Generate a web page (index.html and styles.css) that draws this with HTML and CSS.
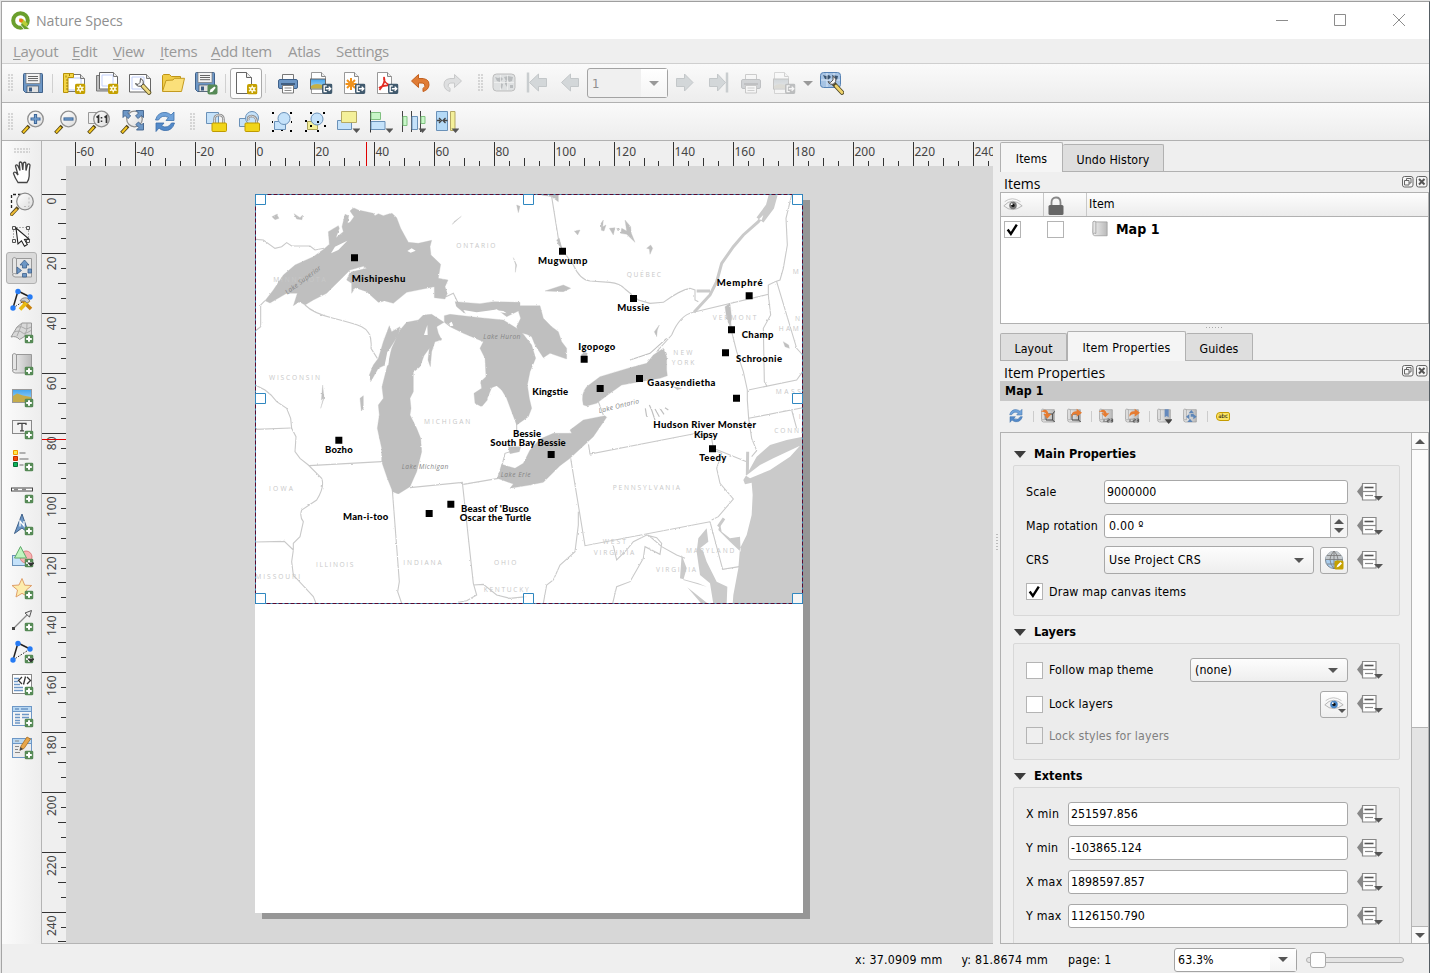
FILE: index.html
```html
<!DOCTYPE html>
<html lang="en">
<head>
<meta charset="utf-8">
<title>Nature Specs</title>
<link rel="stylesheet" href="styles.css">
</head>
<body>
<svg class="defs" aria-hidden="true">
<defs>
<linearGradient id="g-grey" x1="0" x2="1"><stop offset="0" stop-color="#f0f0f0"/><stop offset="1" stop-color="#b9b9b9"/></linearGradient>
<linearGradient id="g-lens" x1="0" y1="0" x2="1" y2="1"><stop offset="0" stop-color="#fff"/><stop offset="1" stop-color="#dcdcdc"/></linearGradient>
<linearGradient id="g-sky" x1="0" x2="0" y1="0" y2="1"><stop offset="0" stop-color="#42a4ee"/><stop offset="1" stop-color="#b4dcf6"/></linearGradient>
<filter id="coast" x="0" y="0" width="1" height="1"><feTurbulence type="fractalNoise" baseFrequency=".11" numOctaves="3" seed="4"/><feDisplacementMap in="SourceGraphic" scale="6" xChannelSelector="R" yChannelSelector="G"/></filter>
</defs>
<symbol id="b-plus" viewBox="0 0 9 9"><rect width="9" height="9" rx="1.8" fill="#568a56"/><path d="M4.5 1.7v5.6M1.7 4.500h5.600" stroke="#fff" stroke-width="2"/></symbol>
<symbol id="b-star" viewBox="0 0 11 11"><rect width="11" height="11" rx="2" fill="#c4a000"/><path d="M5.500 1.500v8M2 3.500l7 4M9 3.500l-7 4" stroke="#fffbe0" stroke-width="1.500"/><circle cx="5.500" cy="5.500" r="2.500" fill="#fffbe0"/><circle cx="5.500" cy="5.500" r="1" fill="#c4a000"/></symbol>
<symbol id="b-exp" viewBox="0 0 11 11"><rect width="11" height="11" rx="2" fill="#415a6e"/><path d="M5 2.500H2.300v6H5M4 5.500h5M7 3.300l2.200 2.200L7 7.700" fill="none" stroke="#fff" stroke-width="1.400"/></symbol>
<symbol id="save" viewBox="0 0 24 24"><path d="M2.500 3.500q0-1 1-1h17q1 0 1 1v18h-17l-2-2z" fill="#6d97c6" stroke="#3f618a"/><rect x="5" y="2.500" width="14" height="10" fill="#f4f4f4" stroke="#777" stroke-width=".7"/><path d="M7 5.500h10M7 7.500h10M7 9.700h10" stroke="#666"/><rect x="6" y="15" width="11.500" height="6.500" fill="#e2e2e2" stroke="#456" stroke-width=".7"/><rect x="8" y="16.500" width="3" height="4" fill="#3b5b82"/></symbol>
<symbol id="saveas" viewBox="0 0 24 24"><use href="#save" x="-1" y="-1"/><rect x="13.500" y="13.500" width="10" height="10" rx="2" fill="#568a56"/><path d="M15.500 21.500l1-3 4-3 1.200 1.200-3.200 4z" fill="#fff"/></symbol>
<symbol id="newlay" viewBox="0 0 24 24"><path d="M2.500 3.500h16l4 4v13h-20z" fill="#fff" stroke="#777"/><path d="M5 7h14v12H5z" fill="none" stroke="#b9caf7"/><path d="M18.500 3.500v4h4" fill="#ddd" stroke="#777"/><path d="M1.500 2.500h10v4h-5.500v15h-4.500z" fill="#f3d547" stroke="#b89206"/><path d="M4 9h2M4 12h2M4 15h2M4 18h2M4 4.500v2M7.500 3v2" stroke="#8a6a00" stroke-width=".8"/><use href="#b-star" x="13" y="12.500" width="10.500" height="10.500"/></symbol>
<symbol id="duplay" viewBox="0 0 24 24"><path d="M1.500 4.500v15.500h17V4.500z" fill="#c0c0c0" stroke="#777"/><path d="M4.500 1.500h14l4 4v12.500h-18z" fill="#fff" stroke="#666"/><path d="M7 4h11v11H7z" fill="none" stroke="#c3d0fa"/><path d="M18.500 1.500v4h4" fill="#eee" stroke="#777"/><use href="#b-star" x="13" y="12.500" width="10.500" height="10.500"/></symbol>
<symbol id="manage" viewBox="0 0 24 24"><path d="M1.500 3.500h17l4 4v13.500h-21z" fill="#fff" stroke="#666"/><path d="M4 6h12v12H4z" fill="none" stroke="#c3d0fa"/><path d="M18.500 3.500v4h4" fill="#ddd" stroke="#777"/><path d="M14 14l7 7.500" stroke="#5d5326" stroke-width="4.600" stroke-linecap="round"/><path d="M15 15l6 6.500" stroke="#eed982" stroke-width="2.800" stroke-linecap="round"/><path d="M12.500 7.500a4 4 0 1 1-5 5l2.500 1 2-2z" fill="#f5f5f5" stroke="#555"/></symbol>
<symbol id="folder" viewBox="0 0 24 24"><path d="M1.500 20V4.500l1-1h6l2 2h9v2" fill="#f1cd48" stroke="#bf9517"/><path d="M1.500 20.500L5 9.500l7-.5 1.500-1.700h10l-3 13.200z" fill="#fbe07a" stroke="#c39a20"/></symbol>
<symbol id="newpage" viewBox="0 0 24 24"><path d="M2.500 1.500h10l5 5v16h-15z" fill="#fff" stroke="#666"/><path d="M12.500 1.500v5h5" fill="#eee" stroke="#666"/><use href="#b-star" x="13" y="13" width="10.500" height="10.500"/></symbol>
<symbol id="print" viewBox="0 0 24 24"><path d="M6.500 9V3.500h11V9" fill="#fafafa" stroke="#777"/><rect x="2.500" y="8.500" width="19" height="9" rx="1.500" fill="#6d97c6" stroke="#3f618a"/><path d="M5 13h14" stroke="#324c6b" stroke-width="1.500"/><path d="M6.500 14.500h11v7.500h-11z" fill="#fff" stroke="#777"/><path d="M8.500 17h7M8.500 19.500h7" stroke="#888"/></symbol>
<symbol id="expimg" viewBox="0 0 24 24"><path d="M2.500 1.500h10l4 4v17h-14z" fill="#fff" stroke="#999"/><path d="M12.500 1.500v4h4" fill="#eee" stroke="#888"/><rect x="1.500" y="8" width="15" height="10" fill="url(#g-sky)" stroke="#666"/><path d="M2 15q5-4 14 0v2.500H2z" fill="#c5b046"/><use href="#b-exp" x="13" y="12.500" width="10.500" height="10.500"/></symbol>
<symbol id="expsvg" viewBox="0 0 24 24"><path d="M2.500 1.500h10l4 4v17h-14z" fill="#fff" stroke="#999"/><path d="M12.500 1.500v4h4" fill="#eee" stroke="#888"/><path d="M9 7v12M3.500 13h11M5 9l8 8M13 9l-8 8" stroke="#f0921c" stroke-width="2"/><use href="#b-exp" x="13" y="12.500" width="10.500" height="10.500"/></symbol>
<symbol id="exppdf" viewBox="0 0 24 24"><path d="M2.500 1.500h10l4 4v17h-14z" fill="#fff" stroke="#999"/><path d="M12.500 1.500v4h4" fill="#eee" stroke="#888"/><path d="M9 6q2 5-4.500 13M9 6q-1 6 7 8.500-8-1-12 2.500" fill="none" stroke="#e32b22" stroke-width="1.700"/><use href="#b-exp" x="13" y="12.500" width="10.500" height="10.500"/></symbol>
<symbol id="undo" viewBox="0 0 24 24"><path d="M3.500 10l7-6.500v4q11-1 10.500 6.500-.5 5-6 6.500v-3q3-2 1.500-4.500-1.500-1.500-6-1v4.500z" fill="#e07c35" stroke="#c25f1d"/></symbol>
<symbol id="redo" viewBox="0 0 24 24"><path d="M20.500 10l-7-6.500v4q-11-1-10.500 6.500.5 5 6 6.500v-3q-3-2-1.500-4.500 1.500-1.500 6-1v4.500z" fill="#dedfe0" stroke="#c8c9ca"/></symbol>
<symbol id="world" viewBox="0 0 24 24"><rect x="1" y="3" width="22" height="17" rx="3.500" fill="#dfe1e2" stroke="#bdbdbd"/><path d="M3 6l3 1 3-1 2 2-3 3-3-1zM8 12l3 1-1 5-2-2zM12 6l4-1 5 1-1 4-3 1-1-2-2 1zM13 10l3 1-1 5-2-3zM18 14h3v3h-3z" fill="#b9bcbe"/><path d="M2 11.500h20M8.500 4v15M15.500 4v15" stroke="#f4f4f4" stroke-width=".7"/></symbol>
<symbol id="prev" viewBox="0 0 24 24"><path d="M3.500 11.500l9-8.500v4.500h8v8h-8V20z" fill="#d3d7d9" stroke="#c3c7c9"/></symbol>
<symbol id="next" viewBox="0 0 24 24"><path d="M20 11.500L11.500 3v4.500h-8v8h8V20z" fill="#d3d7d9" stroke="#c3c7c9"/></symbol>
<symbol id="first" viewBox="0 0 24 24"><path d="M3 1.500v20" stroke="#c9cdcf" stroke-width="2.500"/><path d="M4.500 11.500l9-8.500v4.500h8v8h-8V20z" fill="#d3d7d9" stroke="#c3c7c9"/></symbol>
<symbol id="last" viewBox="0 0 24 24"><path d="M21 1.500v20" stroke="#c9cdcf" stroke-width="2.500"/><path d="M19.500 11.500L11.500 3v4.500h-8v8h8V20z" fill="#d3d7d9" stroke="#c3c7c9"/></symbol>
<symbol id="atlasset" viewBox="0 0 24 24"><rect x=".5" y="1.500" width="20" height="15" rx="3" fill="#a7c4e4" stroke="#5682b4"/><path d="M3 4l3 1 3-1 2 2-3 3-3-1zM12 4l6 1-1 4-3 1z" fill="#3a5470"/><path d="M1 9h19M7 2v14M14 2v14" stroke="#e8f1fa" stroke-width=".8"/><path d="M14 13l8 8.500" stroke="#4d4625" stroke-width="4.500" stroke-linecap="round"/><path d="M16 15l6 6.500" stroke="#eed26b" stroke-width="2.800" stroke-linecap="round"/><path d="M13 5.500a4 4 0 1 1-5 5l2.500 1 2.500-2.500z" fill="#f5f5f5" stroke="#555"/></symbol>
<symbol id="lens" viewBox="0 0 24 24"><path d="M8 16l-6.500 7" stroke="#4a3d12" stroke-width="3.600"/><path d="M7 17l-5 5.500" stroke="#f3c622" stroke-width="2"/><circle cx="14.500" cy="9" r="7.800" fill="url(#g-lens)" stroke="#909090" stroke-width="1.300"/></symbol>
<symbol id="zin" viewBox="0 0 24 24"><use href="#lens"/><path d="M14.500 4v10M9.500 9h10" stroke="#3c6698" stroke-width="3.200"/><path d="M14.500 5v8M10.500 9h8" stroke="#739fce" stroke-width="1.300"/></symbol>
<symbol id="zout" viewBox="0 0 24 24"><use href="#lens"/><path d="M9.500 9h10" stroke="#3c6698" stroke-width="3.200"/><path d="M10.500 9h8" stroke="#739fce" stroke-width="1.300"/></symbol>
<symbol id="zone" viewBox="0 0 24 24"><path d="M1.500 2.500h12v11h-12z" fill="#f0f0f0" stroke="#999"/><use href="#lens"/><path d="M9.500 7.500l2-1.500v7M17.500 7.500l2-1.500v7" fill="none" stroke="#333" stroke-width="1.700"/><path d="M14.500 7v1.500M14.500 10.500V12" stroke="#333" stroke-width="1.600"/></symbol>
<symbol id="zfull" viewBox="0 0 24 24"><use href="#lens"/><path d="M3 .5h7L7.700 3l3 3L8 8.500l-3-3-2 2zM23.500.5v7l-2.300-2-3 3L15.500 6l3-3L16 .5zM23.500 20h-7l2.300-2.500-3-3 2.700-2.500 3 3 2-2z" fill="#6d97c6" stroke="#3f618a" stroke-width=".9"/></symbol>
<symbol id="refresh" viewBox="0 0 24 24"><path d="M2.500 10Q5 1.500 13 2.500q3 .5 5 2.500l3-3v8.500h-8l2.500-3Q9 4 5.500 10z" fill="#71a3da" stroke="#3f72ac" stroke-width=".8"/><path d="M21.500 13Q19 21.500 11 20.500q-3-.5-5-2.500l-3 3.500v-8.500h8l-2.500 3Q15 19 18.500 13z" fill="#5289c9" stroke="#3b6da8" stroke-width=".8"/></symbol>
<symbol id="lock" viewBox="0 0 24 24"><path d="M2.500 2.500h12v11h-12z" fill="#c5e2fa" stroke="#6a91b8"/><path d="M10.500 14V9.500q0-4.500 4.500-4.500t4.500 4.500V14" fill="none" stroke="#8e8e8e" stroke-width="2.600"/><path d="M10.500 13V9.500q0-4.500 4.500-4.500t4.500 4.500V13" fill="none" stroke="#ddd"/><rect x="8" y="13" width="14.500" height="8.500" rx="1" fill="#f1d51a" stroke="#bf9b00"/></symbol>
<symbol id="unlock" viewBox="0 0 24 24"><path d="M2.500 8.500h9v8h-9z" fill="#c5e2fa" stroke="#6a91b8"/><circle cx="15" cy="8" r="6.500" fill="#c5e2fa" stroke="#6a91b8"/><path d="M11.500 10.500q-1.500-4.500 3-4.500 4.500.5 5 4.500V14" fill="none" stroke="#8e8e8e" stroke-width="2.600"/><path d="M11.500 10.500q-1.500-4.500 3-4.500 4.500.5 5 4.500V13" fill="none" stroke="#ddd"/><rect x="8" y="13" width="14.500" height="8.500" rx="1" fill="#f1d51a" stroke="#bf9b00"/></symbol>
<symbol id="group" viewBox="0 0 24 24"><path d="M4.500 11.500h11v8h-11z" fill="#c5e2fa" stroke="#6a91b8"/><circle cx="14" cy="8.500" r="6" fill="#c5e2fa" stroke="#6a91b8"/><path d="M2 2h2v2H2zM20 2h2v2h-2zM2 20h2v2H2zM20 20h2v2h-2zM11 20h2v1h-2zM2 11h1v2H2zM21 11h1v2h-1z"/></symbol>
<symbol id="ungroup" viewBox="0 0 24 24"><path d="M4.500 11.500h10v8h-10z" fill="#f4f09a" stroke="#aaa45a"/><circle cx="14" cy="9" r="6" fill="#c5e2fa" stroke="#6a91b8"/><path d="M2 10h2v2H2zM7 2h2v2H7zM20 2h2v2h-2zM2 20h2v2H2zM14 20h2v2h-2zM21 15h2v2h-2zM7 15h2v2H7zM14 11h2v2h-2z"/></symbol>
<symbol id="raise" viewBox="0 0 24 24"><path d="M1.500 10.500h14v9h-14z" fill="#c5e2fa" stroke="#6a91b8"/><path d="M5.500 1.500h15v11h-15z" fill="#f4f09a" stroke="#b5a964"/><path d="M16.500 18.500h8l-4 4.500z" fill="#555"/></symbol>
<symbol id="align" viewBox="0 0 24 24"><path d="M1.500.5v22" stroke="#333"/><path d="M2 2.500h9.500v7H2z" fill="#c8f7c8" stroke="#80c080"/><path d="M2 11.500h14v8H2z" fill="#c5e2fa" stroke="#6a91b8"/><path d="M16.500 18.500h8l-4 4.500z" fill="#555"/></symbol>
<symbol id="distrib" viewBox="0 0 24 24"><path d="M.5 1v21M9.500 1v21M18.500 1v21" stroke="#444"/><path d="M1 6.500h4v9H1zM19 6.500h4v7h-4z" fill="#c8f7c8" stroke="#80c080"/><path d="M10 6.500h5.500v13H10z" fill="#c5e2fa" stroke="#6a91b8"/><path d="M16.500 18.500h8l-4 4.500z" fill="#555"/></symbol>
<symbol id="resize" viewBox="0 0 24 24"><path d="M1.500 1.500h11v19h-11z" fill="#b5daf7" stroke="#6a91b8"/><path d="M15.500 1.500h4.500v19h-4.500z" fill="#f4f09a" stroke="#b5a964"/><path d="M2 10.500h3M4 8l2.500 2.500L4 13M12.500 10.500H9M10.500 8L8 10.500l2.500 2.500" fill="none" stroke="#444" stroke-width="1.300"/><path d="M16.500 18.500h8l-4 4.500z" fill="#555"/></symbol>
<symbol id="hand" viewBox="0 0 24 24"><path d="M8 22.500Q5 18 3.500 13.500q0-2 2.500-1l2 2.500L5.500 6q.5-2 2.300-.5L10 10.500 9.300 3q1-2 2.500 0l1 7 .5-7q1.500-1.500 2.500 0l.2 7.500 1.500-6q1.500-1.500 2.500.5-1 6-.8 11-.2 3.500-2.200 6.500z" fill="#fff" stroke="#444" stroke-width="1.300"/></symbol>
<symbol id="zoomsel" viewBox="0 0 24 24"><path d="M1.500 16V2.500H12" fill="none" stroke="#222" stroke-dasharray="3 2" stroke-width="1.300"/><path d="M8 15.500L.5 23.500" stroke="#5b4b20" stroke-width="3.600"/><path d="M7 17l-6 6" stroke="#f0bd35" stroke-width="1.800"/><circle cx="15" cy="9.500" r="8.300" fill="url(#g-lens)" stroke="#8a8a8a" stroke-width="1.200"/><path d="M14 14.500h5V4.500" fill="none" stroke="#bbb" stroke-dasharray="2 2"/></symbol>
<symbol id="select" viewBox="0 0 24 24"><path d="M3.500 3.500h15v14h-15z" fill="none" stroke="#666" stroke-dasharray="1 2"/><path d="M2.500 2.500h3v3h-3zM16.500 2.500h3v3h-3zM2.500 15.500h3v3h-3zM16.500 15.500h3v3h-3z" fill="#eee" stroke="#555"/><path d="M6 4l13 11-4.500.5 2.800 5-2.800 1.800-3-5.500L8 20z" fill="#fff" stroke="#222" stroke-width="1.100"/></symbol>
<symbol id="mapitem" viewBox="0 0 24 24"><path d="M3.500 2.500h18v18.500H5q-3-.5-2.500-3.500z" fill="url(#g-grey)" stroke="#999"/><path d="M2.500 17V2.500Q4 .5 6.500 2.500v15.500q-2-1-4 0" fill="#e5e5e5" stroke="#999"/></symbol>
<symbol id="movecontent" viewBox="0 0 24 24"><path d="M3.500 2.500h18v18.500H5q-3-.5-2.500-3.500z" fill="#e6e6e6" stroke="#999"/><path d="M2.500 17V2.500Q4 .5 6.500 2.500v15.500q-2-1-4 0" fill="#e5e5e5" stroke="#999"/><path d="M14.500 4l4.500 5h-2.500v3h-4V9H10zM7 11l4.500 3.500L7 18zM21.500 13v4H18v-4zM12.500 21v-3.500h4V21z" fill="#6d97c6" stroke="#3f618a" stroke-width=".8"/></symbol>
<symbol id="nodes" viewBox="0 0 24 24"><path d="M8 3L3 20M8 3l12 6" stroke="#222" stroke-width="1.500"/><path d="M3 20L20 9" stroke="#222" stroke-dasharray="1.500 1.500"/><circle cx="8" cy="3.500" r="2.700" fill="#267bf4"/><circle cx="20" cy="9" r="2.700" fill="#267bf4"/><circle cx="3" cy="20" r="2.700" fill="#267bf4"/></symbol>
<symbol id="editnodes" viewBox="0 0 24 24"><use href="#nodes"/><path d="M12 12l9 9" stroke="#c8800c" stroke-width="3.600"/><path d="M19 12l-9 9.500" stroke="#e9bb12" stroke-width="3.600"/><path d="M10 13q2-4 7-3l3 3-3 2-2-2z" fill="#ccc" stroke="#888"/></symbol>
<symbol id="add3d" viewBox="0 0 24 24"><path d="M1 17L7 7l5-4h9.500v12.500q-8 0-12 4-3-4-8.500-2.500z" fill="#d8d8d8" stroke="#999"/><path d="M4 12q6-2 8 .5t9-2M7 7q5-1 7 1t7-1M12 3q-2 6-5 13M17 3q1 7-3 14" fill="none" stroke="#aaa"/><use href="#b-plus" x="14.500" y="14.500" width="9" height="9"/></symbol>
<symbol id="addmap" viewBox="0 0 24 24"><use href="#mapitem"/><use href="#b-plus" x="14.500" y="14.500" width="9" height="9"/></symbol>
<symbol id="addpic" viewBox="0 0 24 24"><rect x="2.500" y="5.500" width="19" height="13" fill="url(#g-sky)" stroke="#999"/><path d="M3 12l4-2.500 6 2 8 1.500v5H3z" fill="#c5ac4b"/><use href="#b-plus" x="14.500" y="14.500" width="9" height="9"/></symbol>
<symbol id="addlabel" viewBox="0 0 24 24"><rect x="2.500" y="4.500" width="19" height="13" fill="#f2f2f2" stroke="#888"/><path d="M8 9V7.300h8V9M12 7.500v7.300M10 14.800h4" fill="none" stroke="#444" stroke-width="1.300"/><use href="#b-plus" x="14.500" y="14.500" width="9" height="9"/></symbol>
<symbol id="addlegend" viewBox="0 0 24 24"><path d="M3.500 2.500h4v4h-4z" fill="#fce94f" stroke="#f39a00"/><path d="M3.500 8.500h4v4h-4z" fill="#f0490d" stroke="#c02c00"/><path d="M3.500 14.500h4v4h-4z" fill="#10b35c" stroke="#087038"/><path d="M9.500 5h6M9.500 11h9M9.500 17h4" stroke="#999" stroke-width="1.500"/><use href="#b-plus" x="14.500" y="14.500" width="9" height="9"/></symbol>
<symbol id="addscale" viewBox="0 0 24 24"><rect x="1.500" y="8" width="21" height="3" fill="#fff" stroke="#444"/><path d="M4 9.500h4M12 9.500h4" stroke="#888" stroke-width="2"/><use href="#b-plus" x="14.500" y="14.500" width="9" height="9"/></symbol>
<symbol id="addnorth" viewBox="0 0 24 24"><path d="M12 2l6.500 19L12 16 4.500 21.500z" fill="#6d97c6" stroke="#3f618a"/><path d="M10 14.500V9l4 5V9" fill="none" stroke="#fff" stroke-width="1.300"/><use href="#b-plus" x="14.500" y="14.500" width="9" height="9"/></symbol>
<symbol id="addshape" viewBox="0 0 24 24"><rect x="2.500" y="11.500" width="13" height="10" fill="#c5e2fa" stroke="#6a91b8"/><circle cx="16" cy="13" r="6" fill="#f7b4b4" stroke="#e08080"/><path d="M10.500 2.500l6 11.500h-12z" fill="#bff5bf" stroke="#5fa86a"/><use href="#b-plus" x="14.500" y="14.500" width="9" height="9"/><path d="M17 18.500h8l-4 4z" fill="#333"/></symbol>
<symbol id="addmark" viewBox="0 0 24 24"><path d="M12 2.500l2.700 6.700 7 .3-5.400 4.500 2 7L12 17.300 6 21l1.500-7L2 9.500l7-.5z" fill="#fdedad" stroke="#e0a06a"/><use href="#b-plus" x="14.500" y="14.500" width="9" height="9"/></symbol>
<symbol id="addarrow" viewBox="0 0 24 24"><path d="M3.500 20.500L18 6" stroke="#888" stroke-width="1.300"/><path d="M15 5l6.500-2.500L19.500 9z" fill="#eee" stroke="#555"/><path d="M2 19h3v3H2z" fill="#444"/><use href="#b-plus" x="14.500" y="14.500" width="9" height="9"/></symbol>
<symbol id="addnode" viewBox="0 0 24 24"><use href="#nodes"/><use href="#b-plus" x="14.500" y="14.500" width="9" height="9"/><path d="M17 18.500h8l-4 4z" fill="#333"/></symbol>
<symbol id="addhtml" viewBox="0 0 24 24"><rect x="2.500" y="2.500" width="19" height="19" fill="#fff" stroke="#888"/><path d="M4 6.500h5M4 9.500h4M4 12.500h6M4 15.500h9M4 18.500h9" stroke="#6d97c6" stroke-width="1.700"/><path d="M12 5L8.500 8.500 12 12M17 5l3.500 3.500L17 12M15.500 4.500l-2 8" fill="none" stroke="#333" stroke-width="1.300"/><use href="#b-plus" x="14.500" y="14.500" width="9" height="9"/></symbol>
<symbol id="addtable" viewBox="0 0 24 24"><rect x="2.500" y="2.500" width="19" height="19" fill="#f6f6f6" stroke="#6d97c6"/><path d="M3 3h18v4H3z" fill="#b9d8f2"/><path d="M2.500 7.500h19" stroke="#6d97c6"/><path d="M5 5h4M11 5h7M5 10.500h5M12 10.500h7M5 13.500h5M12 13.500h7M5 16.500h5M5 19h5" stroke="#6d97c6" stroke-width="1.300"/><use href="#b-plus" x="14.500" y="14.500" width="9" height="9"/></symbol>
<symbol id="addmanual" viewBox="0 0 24 24"><rect x="2.500" y="2.500" width="19" height="19" fill="#ececec" stroke="#6d97c6"/><path d="M3 3h18v4H3z" fill="#b9d8f2"/><path d="M2.500 7.500h19" stroke="#6d97c6"/><path d="M5 5h4M5 10.500h4M5 13.500h3M5 16.500h5" stroke="#888" stroke-width="1.200"/><use href="#b-plus" x="14.500" y="14.500" width="9" height="9"/><path d="M10 14l1-4 6-9 3.500 2-6.500 9.500z" fill="#e8a64a" stroke="#a66a1c" stroke-width=".8"/><path d="M9.500 15l1-4 2.500 2z" fill="#444"/></symbol>
<symbol id="eye" viewBox="0 0 24 24"><path d="M1 13q10-11 22 0-12 9-22 0z" fill="#f3f3f3" stroke="#aaa"/><path d="M2 8q9-7 19 0" fill="none" stroke="#bbb"/><circle cx="12" cy="12.500" r="4.500" fill="currentColor"/><circle cx="12" cy="12.500" r="2" fill="#111"/><circle cx="10.500" cy="11" r="1.100" fill="#fff"/></symbol>
<symbol id="dd" viewBox="0 0 26 20"><path d="M0 9.500L5 3v13z" fill="#888"/><path d="M5.500 1.500h13.500v16.500H5.500z" fill="#fff" stroke="#888" stroke-width="1.200"/><path d="M7.500 5.500h9" stroke="#555" stroke-width="1.600"/><path d="M5 9.500h14" stroke="#888" stroke-width="1.200"/><path d="M8 13.500h8" stroke="#888" stroke-width="1.200"/><path d="M17 14h9l-4.500 4.700z" fill="#555"/></symbol>
<symbol id="setmap" viewBox="0 0 24 24"><use href="#mapitem"/><path d="M9 9h10v9H9zM19 9l3-4M19 18l3 3" fill="none" stroke="#444" stroke-width="1.500"/><path d="M1 6q9-8 12 3h4l-6 7-6-7h4Q8 5 1 6z" fill="#e67c32"/></symbol>
<symbol id="viewmap" viewBox="0 0 24 24"><use href="#mapitem"/><path d="M9 9h10v9H9zM19 18l3 3" fill="none" stroke="#444" stroke-width="1.500"/><path d="M8 14Q8 4 16 5V1l8 6-8 6V9q-5-1-8 5z" fill="#e67c32"/></symbol>
<symbol id="setscale" viewBox="0 0 24 24"><use href="#mapitem"/><path d="M9 16v5M12 16v1.500M12 19.500V21M14 16.500h3v2h-3v2.500h3M19 16.500h3V21h-3M19 18.700h3" fill="none" stroke="#444" stroke-width="1.200"/><path d="M1 6q9-8 12 2h4l-6 6-6-6h4Q8 5 1 6z" fill="#e67c32"/></symbol>
<symbol id="viewscale" viewBox="0 0 24 24"><use href="#mapitem"/><path d="M9 16v5M12 16v1.500M12 19.500V21M14 16.500h3v2h-3v2.500h3M19 16.500h3V21h-3M19 18.700h3" fill="none" stroke="#444" stroke-width="1.200"/><path d="M8 13Q8 4 16 5V1l8 6-8 6V9q-5-1-8 4z" fill="#e67c32"/></symbol>
<symbol id="bookmark" viewBox="0 0 24 24"><use href="#mapitem"/><path d="M13 2h6v12l-3-2-3 2z" fill="#6489bd"/><path d="M13 17h12l-6 7z" fill="#444"/></symbol>
<symbol id="interact" viewBox="0 0 24 24"><use href="#mapitem"/><path d="M14 3l4 5h-8zM6 13l5-4v8zM22 13l-5-4v8zM8 21l4-5 4 5zM13 9h4v4h-4z" fill="#5d86b8"/></symbol>
<symbol id="float" viewBox="0 0 12 12"><rect x=".5" y=".5" width="10.500" height="10.500" rx="2" fill="#f6f6f6" stroke="#666"/><path d="M4.500 4.500v-2h4.500v4.500h-2M2.500 4.500H7V9H2.500z" fill="none" stroke="#666"/></symbol>
<symbol id="close" viewBox="0 0 12 12"><rect x=".5" y=".5" width="10.500" height="10.500" rx="2" fill="#f6f6f6" stroke="#666"/><path d="M3 3l5.500 5.500M8.500 3L3 8.500" stroke="#555" stroke-width="2"/></symbol>
</svg>

<div class="window">
  <header class="titlebar">
    <svg class="logo" viewBox="0 0 20 20"><circle cx="9.500" cy="9.500" r="7.300" fill="none" stroke="#6a9f2c" stroke-width="4"/><path d="M11 10.500l8 8h-5.500l-4-4.500z" fill="#6a9f2c" stroke="#fff" stroke-width=".8"/><path d="M8 7.500l4 .5 5 5-2.500 2.500-5-4.500z" fill="#b9cf38"/><circle cx="10" cy="9.500" r="2" fill="#ee7913"/></svg>
    <span class="title">Nature Specs</span>
    <svg class="winbtns" viewBox="0 0 130 14"><path d="M0 6.500h12M58.500.500h11v11h-11zM117 0l12 12M129 0l-12 12" fill="none" stroke="#8c8c8c"/></svg>
  </header>
  <nav class="menubar">
    <span class="m1"><u>L</u>ayout</span><span class="m2"><u>E</u>dit</span><span class="m3"><u>V</u>iew</span><span class="m4"><u>I</u>tems</span><span class="m5"><u>A</u>dd Item</span><span class="m6">Atlas</span><span class="m7">Settings</span>
  </nav>
  <div class="toolbar one">
    <i class="grip first"></i>
    <span class="tb"><svg><use href="#save"/></svg></span><i class="sep"></i>
    <span class="tb"><svg><use href="#newlay"/></svg></span><span class="tb"><svg><use href="#duplay"/></svg></span><span class="tb"><svg><use href="#manage"/></svg></span><span class="tb"><svg><use href="#folder"/></svg></span><span class="tb"><svg><use href="#saveas"/></svg></span><i class="sep"></i>
    <span class="tb on"><svg><use href="#newpage"/></svg></span><i class="sep wide-sep"></i>
    <span class="tb"><svg><use href="#print"/></svg></span><span class="tb"><svg><use href="#expimg"/></svg></span><span class="tb"><svg><use href="#expsvg"/></svg></span><span class="tb"><svg><use href="#exppdf"/></svg></span><span class="tb"><svg><use href="#undo"/></svg></span><span class="tb"><svg><use href="#redo"/></svg></span>
    <i class="grip"></i>
    <span class="tb"><svg><use href="#world"/></svg></span><span class="tb"><svg><use href="#first"/></svg></span><span class="tb"><svg><use href="#prev"/></svg></span>
    <span class="pagebox"><span>1</span><b><i class="caret"></i></b></span>
    <span class="tb"><svg><use href="#next"/></svg></span><span class="tb"><svg><use href="#last"/></svg></span><span class="tb faded"><svg><use href="#print"/></svg></span><span class="tb faded"><svg><use href="#expimg"/></svg></span>
    <span class="ddarrow"><i class="caret"></i></span>
    <span class="tb"><svg><use href="#atlasset"/></svg></span>
  </div>
  <div class="toolbar two">
    <i class="grip first"></i>
    <span class="tb"><svg><use href="#zin"/></svg></span><span class="tb"><svg><use href="#zout"/></svg></span><span class="tb"><svg><use href="#zone"/></svg></span><span class="tb"><svg><use href="#zfull"/></svg></span><span class="tb"><svg><use href="#refresh"/></svg></span>
    <i class="grip"></i>
    <span class="tb"><svg><use href="#lock"/></svg></span><span class="tb"><svg><use href="#unlock"/></svg></span><span class="tb"><svg><use href="#group"/></svg></span><span class="tb"><svg><use href="#ungroup"/></svg></span><span class="tb"><svg><use href="#raise"/></svg></span><span class="tb"><svg><use href="#align"/></svg></span><span class="tb"><svg><use href="#distrib"/></svg></span><span class="tb"><svg><use href="#resize"/></svg></span>
  </div>

  <main class="main">
    <aside class="toolbox">
      <i class="hgrip"></i>
      <span class="tl"><svg><use href="#hand"/></svg></span><span class="tl"><svg><use href="#zoomsel"/></svg></span><span class="tl"><svg><use href="#select"/></svg></span><span class="tl on"><svg><use href="#movecontent"/></svg></span><span class="tl"><svg><use href="#editnodes"/></svg></span><span class="tl"><svg><use href="#add3d"/></svg></span><span class="tl"><svg><use href="#addmap"/></svg></span><span class="tl"><svg><use href="#addpic"/></svg></span><span class="tl"><svg><use href="#addlabel"/></svg></span><span class="tl"><svg><use href="#addlegend"/></svg></span><span class="tl"><svg><use href="#addscale"/></svg></span><span class="tl"><svg><use href="#addnorth"/></svg></span><span class="tl"><svg><use href="#addshape"/></svg></span><span class="tl"><svg><use href="#addmark"/></svg></span><span class="tl"><svg><use href="#addarrow"/></svg></span><span class="tl"><svg><use href="#addnode"/></svg></span><span class="tl"><svg><use href="#addhtml"/></svg></span><span class="tl"><svg><use href="#addtable"/></svg></span><span class="tl"><svg><use href="#addmanual"/></svg></span>
    </aside>
    <section class="view">
      <svg class="ruler-h" id="ruler-h" viewBox="42 141 951 25"></svg>
      <svg class="ruler-v" id="ruler-v" viewBox="42 166 24 777"></svg>
      <div class="canvas">
        <div class="sheet">
          <svg class="map" viewBox="15 27 1644 1230">
            <g class="line">
              <path d="M18 163L40 165 75 190 95 185 110 173 125 183 180 183 195 195 222 190M45 347L32 360V425L16 438M165 360Q190 385 250 400T335 425Q368 440 363 490L382 520M16 600L45 615 63 630 80 650 110 670 122 700 125 730 138 755 135 800 150 820 175 840 215 880Q225 905 200 945L155 975Q148 995 160 1010L150 1055 130 1075V1095L125 1130 130 1170 190 1235 198 1255M16 733L122 729M178 842L395 830M16 1071L103 1069 130 1095M427 915L448 1190 443 1220 455 1255M480 908L637 892 670 1195 680 1230 650 1247 625 1252M640 898L745 880M670 1200L700 1198 740 1230 780 1240 830 1235M755 845L765 805 780 800M800 745V715M588 335L610 325 620 345 630 370"/>
              <path d="M905 35L925 160 937 195 970 240Q990 285 1020 288L1080 292Q1110 295 1125 312L1165 345 1200 355 1240 352Q1290 315 1320 310L1335 315V345L1345 350M1330 382Q1290 390 1265 450L1220 500M1330 382L1555 328M1575 290L1555 300V330L1562 390 1540 430 1543 590 1552 605M1625 30L1608 100 1612 180 1600 250 1590 285 1575 290M1580 290L1640 490 1658 510M1495 615L1640 585 1658 560M1435 360L1445 440 1460 500 1480 560 1492 615V645L1496 700 1505 760 1520 797 1505 815M1496 700L1658 668M1625 675L1640 730"/>
              <path d="M962 820L1005 1082 1380 1010M1015 775L1020 807 1340 745 1385 760 1390 790M1390 795L1415 805 1400 850 1410 895 1450 942 1405 995 1385 1005M1380 1010L1418 1153 1468 1145M1390 790L1490 830M985 980V1020L975 1100 930 1140 910 1185 890 1200 880 1255M1090 1082L1100 1125 1130 1095 1150 1070 1190 1050 1220 1058 1235 1075 1230 1108 1185 1085 1180 1120 1140 1190 1100 1205 1088 1255M1195 1050L1235 1085 1280 1110 1305 1120M1045 650L1060 690"/>
            </g>
            <g class="water">
              <path d="M45 347L70 315 100 270 135 240 190 215 222 192 238 178 235 140 265 122 268 130 258 158 280 140 276 125 285 88 296 92 293 115 300 112 312 95 300 78 310 68 325 75 370 85 375 92 385 86 400 92 425 84 440 98 452 130 475 172 505 175 545 166 540 185 543 210 572 238 565 280 594 285 585 305 592 325 585 342 553 338V305L500 316 470 322 430 355 405 348 385 352 350 320 315 308 305 325V295L290 285 300 262 350 250 340 244 300 255 280 275 230 325 190 345 165 360 148 350 130 362 142 325 110 325 60 354Z"/>
              <path d="M615 350L690 356 730 350 810 352V362H870L880 400 905 425 925 440 935 470 950 490V522L900 505 880 518 855 480 845 455 830 448 805 442 800 425 812 400 805 378 770 395 740 372 700 385 660 390 640 382 620 365Z"/>
              <path d="M583 392L600 388 690 398 760 405 800 430 820 448 845 480 857 520 840 560 832 600 838 640 845 670 835 695 800 720 785 680 770 640 755 615 740 602 725 608 712 640 712 645 695 665 675 655 672 625 695 610 692 590 708 575 705 520 690 490 700 470 640 445 600 425 583 412Z"/>
              <path d="M450 435L470 412 505 405 520 390 545 388 582 412 560 425 565 445 575 465 555 470 545 500 541 545 534 525 538 490 522 512 510 545 490 562V620L480 640 483 670 480 690 500 730 512 760 515 800 500 860 480 905 445 927 428 920 412 880 395 830V790L382 730 388 690 385 660 400 640 396 605 410 550 425 490Z"/>
              <path d="M418 422L425 440 450 425 445 450 420 490 405 540 385 550 362 590 358 570 370 540 385 520 400 470Z"/>
              <path d="M1070 697L1065 692 1000 705 960 735 965 745 910 745 870 762 840 795 820 835 795 850 755 838 742 880 790 897 780 910 840 900 880 892 930 842 960 820 1030 755Z"/>
              <path d="M775 785H812L808 800 780 806ZM1000 660Q992 625 1010 605L1050 575 1140 548 1190 535 1210 510 1240 490 1250 515 1250 555 1252 572 1230 580 1170 590 1115 600 1080 625 1040 655 1010 663Z"/>
              <path d="M1425 365L1440 355 1445 400 1440 425 1430 400ZM994 510L1000 500 1012 505 1005 530ZM885 318L940 300 962 310 940 320ZM218 600L222 640 212 670 220 640 214 645ZM330 640L340 632 340 670 334 678ZM66 95L80 88 87 100 75 104ZM132 86L150 98 158 90 156 104 140 102ZM607 118L634 94 612 110ZM800 60L810 64 805 83ZM790 218L800 240 796 262 797 240ZM875 30H925V50L905 35ZM973 138L990 135 983 150ZM1053 115L1060 105 1058 125 1068 120 1062 138 1054 136ZM1078 130L1095 128 1090 150ZM1100 130L1110 132 1104 138ZM1115 130L1130 138 1125 105 1142 125 1144 145 1155 172 1130 148 1112 145ZM1190 190L1202 180 1208 190 1200 208 1198 192ZM920 165L928 160 935 190 926 180ZM1213 440L1228 420 1222 435 1220 455ZM1600 470L1616 480 1618 490 1605 485ZM1270 605L1295 610 1282 614Z"/>
              <path class="finger" d="M1190 695L1186 670M1215 705L1205 675 1198 660M1228 695L1215 672M1242 688L1230 670M1255 675L1245 668M1140 525L1200 505 1250 460"/>
            </g>
            <g class="sea">
              <path d="M1658 755L1610 765 1560 780 1520 815 1495 860 1480 885 1485 898 1505 893 1508 930 1505 990 1490 1050 1470 1090 1465 1150 1450 1230 1448 1257H1658ZM1370 1030L1345 1060 1340 1100 1350 1170 1380 1195 1390 1257H1430L1432 1205 1400 1190 1385 1160 1370 1130 1360 1100 1350 1090 1375 1070ZM1410 1015L1415 1040 1440 1060 1470 1055 1472 1100 1440 1070 1405 1035ZM1295 1110L1310 1150 1300 1185 1370 1205 1345 1195 1290 1180ZM1312 1207L1375 1257H1355Z"/>
              <path class="river" d="M1567 28L1555 70 1525 110 1480 150 1450 185 1415 235 1400 290 1380 330 1332 382"/>
              <path class="river wide" d="M1570 28L1560 65 1530 105"/>
              <path class="river" d="M1340 318H1380M1422 1000L1405 1025M1493 800L1492 870"/>
            </g>
            <path class="land" d="M1488 872L1530 840 1570 820 1650 782 1620 815 1560 855 1500 880ZM243 205L255 185 292 167 265 195ZM472 198L485 190 497 197 482 203ZM403 545L412 500 420 495 415 540ZM522 450L532 420 533 450ZM598 415L605 410 610 422 600 424ZM640 375L680 382 730 375 760 378 770 385 750 382 700 395 650 390ZM1370 310L1392 282 1385 300ZM1527 103L1540 90 1535 105Z"/>
            <g class="state">
              <text x="619" y="189" textLength="117">ONTARIO</text><text x="70" y="291" textLength="157">MINNESOTA</text><text x="57" y="585" textLength="153">WISCONSIN</text><text x="1130" y="275" textLength="103">QUÉBEC</text><text x="1388" y="405" textLength="131">VERMONT</text><text x="1270" y="510" textLength="57">NEW</text><text x="1265" y="540" textLength="68">YORK</text><text x="1628" y="266">M</text><text x="1635" y="409">N</text><text x="1586" y="438" textLength="80">HAMP</text><text x="1577" y="627" textLength="76">MASS</text><text x="522" y="716" textLength="139">MICHIGAN</text><text x="57" y="917" textLength="72">IOWA</text><text x="16" y="1182" textLength="134">MISSOURI</text><text x="198" y="1146" textLength="112">ILLINOIS</text><text x="460" y="1140" textLength="115">INDIANA</text><text x="732" y="1140" textLength="67">OHIO</text><text x="701" y="1222" textLength="135">KENTUCKY</text><text x="1088" y="916" textLength="202">PENNSYLVANIA</text><text x="1058" y="1078" textLength="70">WEST</text><text x="1031" y="1109" textLength="122">VIRGINIA</text><text x="1218" y="1161" textLength="120">VIRGINIA</text><text x="1308" y="1105" textLength="145">MARYLAND</text><text x="1573" y="743" textLength="90">CONNE</text><text x="1646" y="702">I</text>
            </g>
            <g class="lake">
              <text x="112" y="329" textLength="128" transform="rotate(-37 112 329)">Lake Superior</text><text x="700" y="462" textLength="111">Lake Huron</text><text x="455" y="853" textLength="140">Lake Michigan</text><text x="752" y="876" textLength="90">Lake Erie</text><text x="1048" y="684" textLength="124" transform="rotate(-14 1048 684)">Lake Ontario</text>
            </g>
            <g class="site">
              <path d="M303 208h21v21h-21zM927 188h21v21h-21zM1140 330h21v21h-21zM1487 322h21v21h-21zM1434 424h21v21h-21zM1416 493h21v21h-21zM992 512h21v21h-21zM1158 570h21v21h-21zM1040 600h21v21h-21zM1449 629h21v21h-21zM256 755h21v21h-21zM893 798h21v21h-21zM1377 781h21v21h-21zM592 947h21v21h-21zM527 975h21v21h-21z"/>
              <text x="305" y="290" textLength="161">Mishipeshu</text><text x="864" y="236" textLength="148">Mugwump</text><text x="1102" y="378" textLength="96">Mussie</text><text x="1400" y="303" textLength="138">Memphré</text><text x="1475" y="459" textLength="95">Champ</text><text x="1458" y="531" textLength="138">Schroonie</text><text x="985" y="495" textLength="111">Igopogo</text><text x="1192" y="602" textLength="204">Gaasyendietha</text><text x="847" y="629" textLength="107">Kingstie</text><text x="1210" y="730" textLength="308">Hudson River Monster</text><text x="1332" y="758" textLength="71">Kipsy</text><text x="1348" y="829" textLength="81">Teedy</text><text x="225" y="804" textLength="83">Bozho</text><text x="789" y="755" textLength="84">Bessie</text><text x="721" y="783" textLength="226">South Bay Bessie</text><text x="633" y="980" textLength="203">Beast of 'Busco</text><text x="629" y="1007" textLength="214">Oscar the Turtle</text><text x="279" y="1004" textLength="136">Man-i-too</text>
            </g>
            <rect class="frame" x="16.500" y="28.500" width="1641" height="1227"/>
            <rect class="frame dash" x="16.500" y="28.500" width="1641" height="1227"/>
            <path class="handle" d="M16.500 28.500h30v30h-30zM820.500 28.500h30v30h-30zM1627.500 28.500h30v30h-30zM16.500 625.500h30v30h-30zM1627.500 625.500h30v30h-30zM16.500 1225.500h30v30h-30zM820.500 1225.500h30v30h-30zM1627.500 1225.500h30v30h-30z"/>
          </svg>
        </div>
      </div>
    </section>
    <div class="vsplit"><i></i></div>
    <aside class="panel">
      <div class="tabs top"><span class="tab active w62">Items</span><span class="tab w101">Undo History</span></div>
      <div class="dockhead"><span>Items</span><svg><use href="#float"/></svg><svg><use href="#close"/></svg></div>
      <div class="tree">
        <div class="thead"><span><svg class="eyei"><use href="#eye"/></svg></span><span><svg class="locki" viewBox="0 0 16 20"><path d="M3.500 10V6.500q0-5 4.500-5t4.500 5V10" fill="none" stroke="#888" stroke-width="1.800"/><rect x=".5" y="9" width="15" height="10" rx="1.500" fill="#666"/></svg></span><span class="it">Item</span></div>
        <div class="trow"><i class="check"><svg viewBox="0 0 14 14"><path d="M2.500 7l3 4.200L11 2.500" fill="none" stroke="#000" stroke-width="2.200"/></svg></i><i class="check c2"></i><svg class="mapi"><use href="#mapitem"/></svg><b>Map 1</b></div>
      </div>
      <div class="hsplit"><i></i></div>
      <div class="tabs low"><span class="tab w68">Layout</span><span class="tab active w117">Item Properties</span><span class="tab w68">Guides</span></div>
      <div class="dockhead"><span>Item Properties</span><svg><use href="#float"/></svg><svg><use href="#close"/></svg></div>
      <div class="itembar">Map 1</div>
      <div class="minibar">
        <svg><use href="#refresh"/></svg><i></i><svg><use href="#setmap"/></svg><svg><use href="#viewmap"/></svg><i></i><svg><use href="#setscale"/></svg><svg><use href="#viewscale"/></svg><i></i><svg><use href="#bookmark"/></svg><svg><use href="#interact"/></svg><i></i><span class="abc">abc</span>
      </div>
      <div class="scroll">
        <div class="content">
          <h3 class="gh"><i></i>Main Properties</h3>
          <div class="group g1">
            <div class="row"><label class="l78">Scale</label><span class="input">9000000</span><svg class="dd"><use href="#dd"/></svg></div>
            <div class="row"><label class="l78">Map rotation</label><span class="input spin">0.00 º<b><i class="caret up"></i><i class="caret"></i></b></span><svg class="dd"><use href="#dd"/></svg></div>
            <div class="row"><label class="l78">CRS</label><span class="combo big">Use Project CRS<i class="caret"></i></span><span class="sbtn"><svg viewBox="0 0 20 20"><circle cx="10" cy="10" r="8.500" fill="#a9cdee" stroke="#7a8a98"/><path d="M1.500 9.500a8.500 8.500 0 0 1 17 0z" fill="#c4c9cc"/><path d="M1.500 9.500h17M3 5.500h14M10 1v18M10 1q-8 8 0 18M10 1q8 8 0 18M3 14h14" fill="none" stroke="#777" stroke-width=".8"/><rect x="10.500" y="10.500" width="9" height="9" rx="1.500" fill="#c4a000"/><path d="M12.500 17.500l1-2.500 3-3 1.500 1.500-3 3z" fill="#fff"/></svg></span><svg class="dd"><use href="#dd"/></svg></div>
            <div class="row chk"><i class="check"><svg viewBox="0 0 14 14"><path d="M2.500 7l3 4.200L11 2.500" fill="none" stroke="#000" stroke-width="2.200"/></svg></i><label>Draw map canvas items</label></div>
          </div>
          <h3 class="gh"><i></i>Layers</h3>
          <div class="group g2">
            <div class="row"><i class="check"></i><label class="grow">Follow map theme</label><span class="combo theme">(none)<i class="caret"></i></span><svg class="dd"><use href="#dd"/></svg></div>
            <div class="row"><i class="check"></i><label class="grow">Lock layers</label><span class="sbtn blue"><svg><use href="#eye"/></svg><i class="caret"></i></span><svg class="dd"><use href="#dd"/></svg></div>
            <div class="row chk off"><i class="check"></i><label>Lock styles for layers</label></div>
          </div>
          <h3 class="gh"><i></i>Extents</h3>
          <div class="group g3">
            <div class="row"><label class="l42">X min</label><span class="input">251597.856</span><svg class="dd"><use href="#dd"/></svg></div>
            <div class="row"><label class="l42">Y min</label><span class="input">-103865.124</span><svg class="dd"><use href="#dd"/></svg></div>
            <div class="row"><label class="l42">X max</label><span class="input">1898597.857</span><svg class="dd"><use href="#dd"/></svg></div>
            <div class="row"><label class="l42">Y max</label><span class="input">1126150.790</span><svg class="dd"><use href="#dd"/></svg></div>
          </div>
        </div>
        <div class="sbar"><span class="sa"><i class="caret up"></i></span><span class="thumb"></span><span class="track"></span><span class="sa end"><i class="caret"></i></span></div>
      </div>
    </aside>
  </main>
  <footer class="status">
    <span class="s1">x: 37.0909 mm</span><span class="s1">y: 81.8674 mm</span><span class="s3">page: 1</span>
    <span class="zoombox"><span>63.3%</span><b><i class="caret"></i></b></span>
    <span class="slider"><i></i></span>
  </footer>
</div>
<script src="ruler.js"></script>
</body>
</html>
```
FILE: styles.css
```css
* { box-sizing: border-box; }
body { margin: 0; height: 973px; overflow: hidden; background: #e4e4e4; padding: 1px 1px 0 1px; font: 12.3px "DejaVu Sans Condensed", "DejaVu Sans", sans-serif; color: #000; }
.defs { position: absolute; width: 0; height: 0; }
svg { display: block; flex: none; }
.window { height: 972px; display: flex; flex-direction: column; background: #efefef; border-top: 1px solid #9f9f9f; border-left: 1px solid #a5a5a5; border-right: 1px solid #555d63; margin-right: -1px; }
.titlebar { height: 37px; background: #fff; display: flex; align-items: center; padding-left: 9px; flex: none; }
.logo { width: 20px; height: 20px; }
.title { flex: 1; margin-left: 5px; font: 14.2px "Open Sans", sans-serif; color: #8f8f8f; letter-spacing: -.08px; }
.winbtns { width: 130px; height: 14px; margin-right: 23px; }
.menubar { height: 25px; flex: none; border-bottom: 1px solid #cfcfcf; display: flex; font: 15px/25px "Open Sans", sans-serif; letter-spacing: -.35px; color: #999; padding-left: 11px; }
.menubar span { white-space: nowrap; }
.menubar u { text-underline-offset: 2px; }
.m1 { width: 59px; } .m2 { width: 41px; } .m3 { width: 47px; } .m4 { width: 51px; } .m5 { width: 77px; } .m6 { width: 48px; }
.toolbar { flex: none; display: flex; align-items: center; border-bottom: 1px solid #b1b1b1; background: linear-gradient(#fafafa, #ededed); }
.toolbar.one { height: 39px; }
.toolbar.two { height: 38px; }
.tb { width: 33px; height: 32px; flex: none; display: flex; align-items: center; justify-content: center; }
.tb svg, .tl svg { width: 24px; height: 24px; overflow: visible; }
.tb.on { width: 32px; height: 31px; border: 1px solid #aaa; border-radius: 3px; background: #fdfdfd; }
.faded { filter: grayscale(.85); opacity: .33; }
.sep { width: 8px; height: 19px; flex: none; background: linear-gradient(90deg, transparent 3px, #d0d0d0 3px, #d0d0d0 4px, transparent 4px); }
.wide-sep { width: 9px; }
.grip { width: 18px; height: 18px; flex: none; background: radial-gradient(circle at 1px 1px, #b4b4b4 .5px, transparent .9px) 0 0/3px 3px; background-clip: content-box; padding: 0 4px 0 9px; }
.grip.first { width: 14px; padding: 0 3px 0 6px; }
.pagebox, .zoombox { display: flex; background: #f0f0f0; border: 1px solid #a3a3a3; border-radius: 3px; flex: none; }
.pagebox { width: 81px; height: 30px; margin-left: 1px; color: #8f8f8f; line-height: 29px; font-size: 13px; }
.pagebox span { width: 53px; padding-left: 4px; }
.pagebox b, .zoombox b { flex: 1; display: flex; align-items: center; justify-content: center; background: linear-gradient(#fff, #f4f4f4); }
.caret { width: 0; height: 0; flex: none; border: 5px solid transparent; border-top-color: #555; border-bottom: 0; }
.caret.up { border: 5px solid transparent; border-bottom-color: #555; border-top: 0; }
.toolbar .caret { border-top-color: #999; }
.ddarrow { width: 15px; display: flex; justify-content: center; flex: none; }
.main { height: 803px; flex: none; display: flex; }
.toolbox { width: 40px; flex: none; background: linear-gradient(90deg, #fbfbfb, #ededed); border-right: 1px solid #b4b4b4; display: flex; flex-direction: column; align-items: center; }
.hgrip { width: 16px; height: 5px; flex: none; margin: 7px 0 3px; background: radial-gradient(circle at 1px 1px, #b4b4b4 .5px, transparent .9px) 0 0/3px 3px; }
.tl { width: 31px; height: 32px; flex: none; display: flex; align-items: center; justify-content: center; }
.tl.on { background: #dadada; border: 1px solid #b1b1b1; border-radius: 3px; }
.view { width: 951px; flex: none; display: grid; grid-template: 25px 777px / 24px 927px; background: #efefef; overflow: hidden; border-bottom: 1px solid #b4b4b4; }
.ruler-h { grid-column: 1 / 3; width: 951px; height: 25px; }
.ruler-v { width: 24px; height: 777px; }
.ruler-h text, .ruler-v text { font: 12px "Noto Sans", sans-serif; fill: #444; }
.ruler-h path, .ruler-v path { stroke: #333; shape-rendering: crispEdges; }
.ruler-h .now, .ruler-v .now { stroke: #e00000; }
.canvas { background: #d7d7d7; padding: 28px 0 0 189px; overflow: hidden; }
.sheet { width: 548px; height: 719px; background: #fff; box-shadow: 7px 6px 0 #969696; }
.map { width: 548px; height: 410px; }
.line { filter: url(#coast); }
.line path { fill: none; stroke: #c9c9c9; stroke-width: 3.300; }
.water { fill: #bfbfbf; stroke: #bfbfbf; stroke-width: 1; filter: url(#coast); }
.finger { fill: none; stroke-width: 3.500; }
.sea { fill: #cacaca; }
.river { fill: none; stroke: #cacaca; stroke-width: 9; }
.wide { stroke-width: 26; }
.land { fill: #fff; }
.state { font: 20px "Open Sans", sans-serif; fill: #c8c8c8; }
.lake { font: italic 20px "Open Sans", sans-serif; fill: #858585; }
.site { font: 900 28.5px Lato, sans-serif; fill: #000; }
.frame { fill: none; stroke: #3d9ac4; stroke-width: 3; }
.frame.dash { stroke: #5a0a32; stroke-dasharray: 12 6; }
.handle { fill: #fff; fill-opacity: .8; stroke: #2f87c0; stroke-width: 3; }
.vsplit { width: 7px; flex: none; display: flex; align-items: center; justify-content: center; }
.vsplit i { width: 2px; height: 17px; background: repeating-linear-gradient(#bbb 0 1px, transparent 1px 3px); }
.panel { width: 429px; flex: none; display: flex; flex-direction: column; }
.tabs { display: flex; align-items: flex-end; flex: none; border-bottom: 1px solid #b1b1b1; }
.tabs.top { height: 31px; }
.tabs.low { height: 31px; }
.tab { height: 27px; border: 1px solid #b1b1b1; border-bottom: 0; background: #dedede; display: flex; align-items: center; justify-content: center; border-radius: 2px 2px 0 0; padding-top: 3px; letter-spacing: .1px; white-space: nowrap; }
.tab + .tab { border-left: 0; }
.tab.active { height: 30px; margin-bottom: -1px; background: #f5f5f5; padding-top: 2px; border: 1px solid #b1b1b1; border-bottom: 0; }
.w62 { width: 63px; } .w101 { width: 101px; } .w68 { width: 67px; } .w117 { width: 119px; }
.w117.active { letter-spacing: .24px; }
.dockhead { height: 20px; flex: none; display: flex; align-items: center; padding: 3px 1px 0 4px; font: 14px "Open Sans", sans-serif; }
.dockhead span { flex: 1; }
.dockhead svg { width: 12px; height: 12px; margin: -3px 0 0 2px; }
.tree { height: 132px; flex: none; background: #fff; border: 1px solid #b1b1b1; }
.thead { height: 24px; display: flex; border-bottom: 1px solid #b1b1b1; background: linear-gradient(#fdfdfd, #ececec); }
.thead span { width: 43px; border-right: 1px solid #c8c8c8; padding-left: 2px; }
.thead .it { flex: 1; border: 0; line-height: 22px; letter-spacing: .15px; }
.eyei { width: 20px; height: 24px; color: #777; }
.locki { width: 16px; height: 20px; margin: 3px 0 0 2px; }
.trow { display: flex; align-items: center; height: 22px; margin-top: 1px; padding-left: 3px; }
.trow b { font-size: 14.1px; margin-left: 6px; }
.check { width: 17px; height: 17px; flex: none; background: #fff; border: 1px solid #b4b4b4; }
.check svg { width: 15px; height: 15px; }
.c2 { margin: 0 26px; }
.mapi { width: 20px; height: 18px; }
.hsplit { height: 6px; display: flex; justify-content: center; align-items: center; flex: none; }
.hsplit i { width: 17px; height: 1px; background: repeating-linear-gradient(90deg, #aaa 0 1px, transparent 1px 3px); }
.itembar { height: 20px; flex: none; background: #c8c8c8; font-weight: bold; line-height: 21px; padding-left: 5px; letter-spacing: .15px; }
.minibar { height: 31px; flex: none; display: flex; align-items: center; padding-left: 8px; padding-bottom: 1px; }
.minibar svg { width: 16px; height: 16px; margin-right: 10px; overflow: visible; }
.minibar i { width: 1px; height: 11px; background: #ccc; margin: 0 6px 0 -1px; }
.abc { width: 14px; height: 9px; margin-left: 2px; border: 1px solid #c49b00; border-radius: 4px 2px 2px 4px; background: #fbe463; font-size: 6px; line-height: 6px; text-align: center; }
.scroll { height: 512px; flex: none; border: 1px solid #b1b1b1; display: flex; overflow: hidden; }
.content { width: 410px; flex: none; padding: 9px 11px 0 12px; overflow: hidden; letter-spacing: .13px; }
.gh { margin: 0; height: 23px; font-size: 12.6px; line-height: 23px; display: flex; align-items: center; letter-spacing: .03px; }
.gh i { border: 6px solid transparent; border-top: 7px solid #3c3c3c; border-bottom: 0; margin: 1px 8px 0 1px; }
.group { border: 1px solid #d8d8d8; background: #ececec; padding: 14px 16px 0 12px; display: flex; flex-direction: column; border-radius: 2px; }
.g1 { height: 151px; margin-bottom: 4px; }
.g2 { height: 117px; margin-bottom: 4px; }
.g3 { height: 180px; }
.row { height: 24px; margin-bottom: 10px; display: flex; align-items: center; flex: none; white-space: nowrap; }
.row.chk { height: 17px; margin-top: 1px; }
.l78 { width: 78px; } .l42 { width: 42px; letter-spacing: .25px; } .grow { flex: 1; }
.row .check + label { margin-left: 6px; letter-spacing: .16px; }
.off { color: #808080; }
.off .check { background: #efefef; }
.input, .combo { height: 24px; border: 1px solid #a8a8a8; border-radius: 3px; background: #fff; line-height: 23px; padding-left: 2px; flex: 1; display: flex; letter-spacing: 0; }
.spin { padding-left: 4px; letter-spacing: .2px; }
.spin b { margin-left: auto; width: 17px; border-left: 1px solid #aaa; background: #f4f4f4; display: flex; flex-direction: column; align-items: center; justify-content: center; gap: 4px; border-radius: 0 3px 3px 0; }
.spin .caret { border-width: 5px 5px 0; }
.spin .caret.up { border-width: 0 5px 5px; }
.combo { background: linear-gradient(#fdfdfd, #eee); align-items: center; padding: 0 9px 0 4px; justify-content: space-between; letter-spacing: .28px; }
.combo.big { height: 28px; }
.combo.theme { flex: none; width: 158px; letter-spacing: .1px; }
.sbtn { width: 28px; height: 27px; margin-left: 6px; border: 1px solid #a8a8a8; border-radius: 3px; background: linear-gradient(#fff, #eee); display: flex; align-items: center; justify-content: center; position: relative; }
.sbtn svg { width: 20px; height: 20px; }
.blue { color: #4a86c5; }
.sbtn .caret { position: absolute; right: 1px; bottom: 4px; border-width: 4px 4px 0; }
.dd { width: 26px; height: 20px; margin: 0 0 0 9px; }
.sbar { width: 17px; flex: none; display: flex; flex-direction: column; border-left: 1px solid #b4b4b4; }
.sa { height: 17px; flex: none; background: #fafafa; border-bottom: 1px solid #b4b4b4; display: flex; align-items: center; justify-content: center; }
.sa.end { border-bottom: 0; border-top: 1px solid #b4b4b4; }
.thumb { height: 278px; flex: none; background: #fbfbfb; border-bottom: 1px solid #b4b4b4; }
.track { flex: 1; background: #e4e4e4; }
.status { height: 29px; flex: none; display: flex; align-items: center; padding-left: 853px; padding-top: 2px; white-space: nowrap; letter-spacing: .22px; }
.s1 { width: 106.500px; } .s3 { width: 106px; }
.zoombox { width: 123px; height: 24px; background: #fff; line-height: 23px; letter-spacing: 0.1px; }
.zoombox span { width: 95px; padding-left: 3px; }
.slider { margin: 0 0 0 9px; width: 98px; height: 6px; border: 1px solid #b1b1b1; border-radius: 3px; background: #e4e4e4; display: flex; align-items: center; padding-left: 3px; }
.slider i { width: 16px; height: 16px; flex: none; border: 1px solid #aaa; border-radius: 3px; background: #fdfdfd; }
```
FILE: ruler.js
```js
// Draws ruler ticks every 5 mm and labels every 20 mm.
const PX_PER_MM = 2.9917;
const NS = 'http://www.w3.org/2000/svg';

function add(parent, name, attrs, text) {
  const el = document.createElementNS(NS, name);
  for (const k in attrs) el.setAttribute(k, attrs[k]);
  if (text !== undefined) el.textContent = text;
  parent.appendChild(el);
}

const h = document.getElementById('ruler-h');
for (let mm = -60; mm <= 245; mm += 5) {
  const x = Math.floor(255.1 + mm * PX_PER_MM) + 0.5;
  const len = mm % 20 === 0 ? 24 : mm % 10 === 0 ? 8 : 5;
  add(h, 'path', { d: `M${x} 166v${-len}` });
  if (mm % 20 === 0) add(h, 'text', { x: x + 1, y: 156 }, mm);
}
add(h, 'path', { d: 'M366.500 142v24', class: 'now' });

const v = document.getElementById('ruler-v');
for (let mm = -5; mm <= 250; mm += 5) {
  const y = Math.floor(194.05 + mm * PX_PER_MM) + 0.5;
  const len = mm % 20 === 0 ? 24 : mm % 10 === 0 ? 8 : 5;
  add(v, 'path', { d: `M66 ${y}h${-len}` });
  if (mm % 20 === 0) add(v, 'text', { 'text-anchor': 'end', transform: `translate(56 ${y + 3}) rotate(-90)` }, mm);
}
add(v, 'path', { d: 'M42 439.500h24', class: 'now' });
```
